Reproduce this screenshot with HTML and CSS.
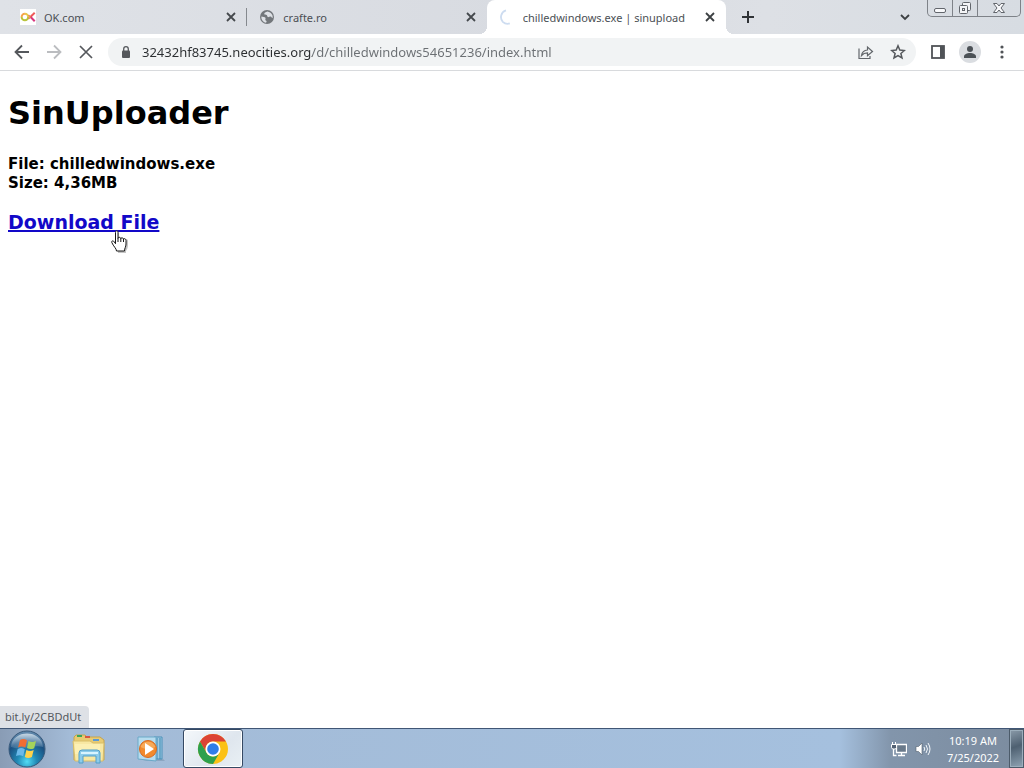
FILE: index.html
```html
<!DOCTYPE html>
<html lang="en">
<head>
<meta charset="utf-8">
<title>chilledwindows.exe | sinupload</title>
<link rel="stylesheet" href="styles.css">
</head>
<body>
<header class="tabstrip">
  <nav class="tabs" aria-label="Tabs">
    <div class="tab tab-first">
      <svg class="icon16" viewBox="0 0 16 16"><rect width="16" height="16" fill="#fff"/><g fill="none" stroke-width="2"><path d="M1.600 8a3.300 3.300 0 0 1 3.300-3.300" stroke="#f5a34a"/><path d="M1.600 8a3.300 3.300 0 0 0 6.600 0" stroke="#b9c43c"/><path d="M4.900 4.700A3.300 3.300 0 0 1 8.200 8" stroke="#e9c74a"/><path d="M14.700 3.700 10.400 8" stroke="#ef5a5a"/><path d="m10.400 7.800 4.300 4.500" stroke="#d8367e"/><path d="m8.500 6 2 2-2 2" stroke="#ea7a4d" stroke-width="1.200"/></g></svg>
      <span class="tab-title">OK.com</span>
      <button class="tab-close" aria-label="Close OK.com"><svg class="icon10" viewBox="0 0 10 10"><path d="m1 1 8 8M9 1 1 9" stroke="#45494d" stroke-width="1.800"/></svg></button>
    </div>
    <div class="tab">
      <svg class="icon16" viewBox="0 0 16 16"><circle cx="8" cy="8" r="7" fill="#73777b"/><path d="M8.500 2.400c-2 .7-3.200 1-3.200 2.400 0 1.300 1.600.8 2.400 1.300.8.600.2 1.500 1.200 2 1 .4 1.700-.8 2.700-.5 1 .3 1.100 1.600 2 1.400.6-2.600-1-5.800-5.100-6.600ZM2.400 7.500c1.600.4 3.500.5 4 1.300.5.800-.3 1.500 0 2.200.3.800 1.300.7 1.200 1.500-.1.600-.5.900-.6 1.200-3-.6-5-3.200-4.600-6.200Z" fill="#dee1e6"/></svg>
      <span class="tab-title">crafte.ro</span>
      <button class="tab-close" aria-label="Close crafte.ro"><svg class="icon10" viewBox="0 0 10 10"><path d="m1 1 8 8M9 1 1 9" stroke="#45494d" stroke-width="1.800"/></svg></button>
    </div>
    <div class="tab tab-active">
      <svg class="icon16" viewBox="0 0 16 16"><path d="M7 1.400a7 7 0 0 0-3.200 11.400 7 7 0 0 0 7 1.600" fill="none" stroke="#cddcf0" stroke-width="1.800"/></svg>
      <span class="tab-title">chilledwindows.exe | sinupload</span>
      <button class="tab-close" aria-label="Close chilledwindows.exe"><svg class="icon10" viewBox="0 0 10 10"><path d="m1 1 8 8M9 1 1 9" stroke="#3c4043" stroke-width="1.800"/></svg></button>
    </div>
  </nav>
  <button class="new-tab" aria-label="New tab"><svg class="icon12" viewBox="0 0 12 12"><path d="M6 0v12M0 6h12" stroke="#303336" stroke-width="2"/></svg></button>
  <button class="tab-search" aria-label="Search tabs"><svg class="icon10" viewBox="0 0 10 10"><path d="m1 3 4 4 4-4" fill="none" stroke="#3c4043" stroke-width="1.800"/></svg></button>
  <div class="window-controls">
    <button class="wc" aria-label="Minimize"><svg class="wc-icon" viewBox="0 0 14 14"><rect x="1.500" y="7.500" width="11" height="4" rx="1.500" fill="#f8f9fb" stroke="#62666c"/></svg></button>
    <button class="wc" aria-label="Restore"><svg class="wc-icon" viewBox="0 0 14 14"><g fill="#f4f5f7" stroke="#62666c"><rect x="4.500" y="1.500" width="8" height="8" rx="1"/><rect x="1.500" y="4.500" width="8" height="8" rx="1"/><rect x="4.500" y="7.500" width="2" height="2"/></g></svg></button>
    <button class="wc wc-close" aria-label="Close window"><svg class="wc-icon" viewBox="0 0 14 14"><path d="M1.500 2.500h3.500l2 2.500 2-2.500h3.500L9 7l3.500 4.500H9L7 9l-2 2.500H1.500L5 7Z" fill="#f8f9fb" stroke="#62666c"/></svg></button>
  </div>
</header>
<div class="toolbar">
  <button class="tool" aria-label="Back"><svg class="icon16" viewBox="0 0 16 16"><path d="M15 8H2M8 1.500 1.500 8 8 14.500" fill="none" stroke="#55585c" stroke-width="1.800"/></svg></button>
  <button class="tool" aria-label="Forward"><svg class="icon16" viewBox="0 0 16 16"><path d="M1 8h13M8 1.500 14.500 8 8 14.500" fill="none" stroke="#bbbdc0" stroke-width="1.800"/></svg></button>
  <button class="tool" aria-label="Stop"><svg class="icon16" viewBox="0 0 16 16"><path d="m2 2 12 12M14 2 2 14" stroke="#55585c" stroke-width="1.700"/></svg></button>
  <form class="omnibox">
    <svg class="icon12" viewBox="0 0 12 12"><rect x="2" y="4.500" width="8" height="7.500" rx="1" fill="#55585c"/><path d="M3.700 5V3a2.300 2.300 0 0 1 4.600 0v2" fill="none" stroke="#55585c" stroke-width="1.300"/></svg>
    <input class="url" type="text" aria-label="Address" value="32432hf83745.neocities.org/d/chilledwindows54651236/index.html">
    <button type="button" class="tool" aria-label="Share"><svg class="icon16" viewBox="0 0 16 16"><path d="M1 4.500v10h11V12M3.500 11.500C4 8 6 6.200 9.500 6V3l5 4.500-5 4.200V8.900c-2.500 0-4.500.8-6 2.600Z" fill="none" stroke="#62666a" stroke-width="1.200"/></svg></button>
    <button type="button" class="tool" aria-label="Bookmark"><svg class="icon16" viewBox="0 0 16 16"><path d="m8 1.800 1.800 4.300 4.600.4-3.500 3 1.100 4.500L8 11.600 4 14l1.100-4.500-3.500-3 4.600-.4Z" fill="none" stroke="#55585c" stroke-width="1.500"/></svg></button>
  </form>
  <button class="tool" aria-label="Side panel"><svg class="icon16" viewBox="0 0 16 16"><rect x="2" y="2" width="12" height="12" fill="none" stroke="#505357" stroke-width="1.800"/><path d="M10 2h4v12h-4Z" fill="#505357"/></svg></button>
  <button class="tool" aria-label="Profile"><svg class="icon22" viewBox="0 0 22 22"><circle cx="11" cy="11" r="11" fill="#dadde1"/><circle cx="11" cy="8" r="3" fill="#4c5257"/><path d="M5 17v-1.500c0-2 3-3.500 6-3.500s6 1.500 6 3.500V17Z" fill="#4c5257"/></svg></button>
  <button class="tool" aria-label="Menu"><svg class="icon16" viewBox="0 0 16 16"><g fill="#505357"><circle cx="8" cy="3" r="1.600"/><circle cx="8" cy="8" r="1.600"/><circle cx="8" cy="13" r="1.600"/></g></svg></button>
</div>
<main class="page">
  <h1 class="title">SinUploader</h1>
  <p class="details">File: chilledwindows.exe<br>Size: 4,36MB</p>
  <p class="download"><a class="download-link" href="#">Download File</a></p>
  <svg class="cursor" viewBox="0 0 20 24"><path d="M6 3.500C6 1 9 1 9 3.500V9c0-2 3-1.500 3 .3 0-1.600 3-1.200 3 .5 0-1.500 3-1 3 1V15c0 3-1 4.500-2 6v2H8v-2c-2-2-3.500-4.500-5.500-8-.8-1.700 1.500-2.600 2.500-.8l1 1.500Z" fill="#8a8a8a" opacity=".5"/><path d="M5.500 2.500C5.500.2 8 .2 8 2.500v5.800c0-1.500 2.800-1.300 2.800.4 0-1.300 2.700-1.100 2.700.6 0-1.200 2.500-.8 2.500 1.200V14c0 3-1.500 4-1.500 7h-8c0-2.500-3-4.500-4.700-8.500-.6-1.700 1.400-2.200 2.300-.8l1.400 2Z" fill="#fff" stroke="#171717"/><path d="M8 8v4m2.800-3.500V12m2.700-3v3" stroke="#171717"/></svg>
  <div class="status">bit.ly/2CBDdUt</div>
</main>
<footer class="taskbar">
  <button class="start" aria-label="Start"><svg class="icon38" viewBox="0 0 38 38"><defs><radialGradient id="orb" cx=".5" cy=".85" r=".9"><stop offset="0" stop-color="#52dcf4"/><stop offset=".3" stop-color="#2189b5"/><stop offset=".65" stop-color="#1b4f80"/><stop offset="1" stop-color="#7c9fbd"/></radialGradient><linearGradient id="gloss" x2="0" y2="1"><stop stop-color="#e4eef5" stop-opacity=".8"/><stop offset="1" stop-color="#a6c3d8" stop-opacity=".2"/></linearGradient></defs><circle cx="19" cy="19" r="18" fill="url(#orb)" stroke="#38597a"/><path d="M3 17C4-1 34-1 35 17c-9-3-21 4-32 0Z" fill="url(#gloss)"/><path d="M12 10c2.500-1.300 4.700-1.200 7 .3l-1.700 7.300c-2.500-1.400-4.800-1.500-7.200-.2Z" fill="#f16d32"/><path d="M20.500 11c2.400 1.300 4.700 1.300 7.500 0l-1.800 7.200c-2.600 1.200-4.800 1.200-7.200-.2Z" fill="#a5d35a"/><path d="M9.700 19c2.500-1.200 4.800-1.200 7.100.2l-1.600 7c-2.500-1.400-4.700-1.400-7.200-.1Z" fill="#6bb9ea"/><path d="M18.400 20c2.400 1.300 4.800 1.300 7.300.1l-1.800 6.900c-2.600 1.200-4.800 1.200-7.100-.1Z" fill="#ffd24b"/></svg></button>
  <button class="task" aria-label="Explorer"><svg class="icon34" viewBox="0 0 34 34"><path d="M2 5 4 3h9l2 2h13l4 3v20H2Z" fill="#e8cb72" stroke="#c5a44e"/><path d="M5 4h5" stroke="#3aa65a" stroke-width="2"/><path d="M13 5h5" stroke="#d75641" stroke-width="2"/><path d="M21 8h6" stroke="#5b9ad5" stroke-width="2"/><path d="M1 9h17l3 2h11l-1 18H3Z" fill="#f8e8a3" stroke="#d8bd68"/><path d="M3 12h25v10H3Z" fill="#fff5bf" opacity=".6"/><path d="M7 31V21q0-3 3-3h15q3 0 3 3v10h-4v-7H11v7Z" fill="#8dccea" stroke="#529fc9"/><path d="M9 21h17" stroke="#d8f4ff" stroke-width="2"/></svg></button>
  <button class="task" aria-label="Media Player"><svg class="icon28" viewBox="0 0 28 28"><path d="m6 25 20-1 2 2H10Z" fill="#7590aa" opacity=".5"/><path d="M17 2h8v22h-8Z" fill="#9fcae3" stroke="#4a91b9"/><path d="M20 3v21m3-21v21" stroke="#3c87b1"/><path d="M1 2h18v24L1 24Z" fill="#b6dcef" stroke="#6aa9c8"/><circle cx="11" cy="14" r="8.500" fill="#f28a2c" stroke="#d76a20"/><path d="M3.500 12a8 8 0 0 1 15 0q-8 4-15 0Z" fill="#fac078" opacity=".6"/><path d="m8 8 9 6-9 6Z" fill="#fff"/></svg></button>
  <button class="task task-active" aria-label="Chrome"><svg class="icon32" viewBox="0 0 32 32"><circle cx="16" cy="16" r="15" fill="#fbc116"/><path d="M3 8.500A15 15 0 0 1 29 8.500H16A7.500 7.500 0 0 0 9.500 19.800Z" fill="#dc4335"/><path d="M3 8.500 9.500 19.800A7.500 7.500 0 0 0 22.500 19.800L16 31A15 15 0 0 1 3 8.500Z" fill="#2da04d"/><circle cx="16" cy="16" r="7.500" fill="#fff"/><circle cx="16" cy="16" r="5.800" fill="#307de8"/></svg></button>
  <div class="tray">
    <svg class="icon16" viewBox="0 0 16 16"><path d="M5.500 3.500h10v8h-10Z" fill="#69798a" stroke="#fff" stroke-width="1.300"/><path d="M10.500 12v2M7 14.500h7M2.500 8v6.500h3" fill="none" stroke="#fff" stroke-width="1.300"/><path d="M.5 3.500h5v3l-1 1.500h-3l-1-1.500Z" fill="#536274" stroke="#fff"/><path d="M1.500 1v2m3-2v2" stroke="#fff"/></svg>
    <svg class="icon16" viewBox="0 0 16 16"><path d="M1 5.500h2.500L7 2v12l-3.500-3.500H1Z" fill="#fff" stroke="#53606d" stroke-width=".6"/><path d="M9 6q1.500 2 0 4m2-6q3 4 0 8m2-10q4 6 0 12" fill="none" stroke="#f2f6fa"/></svg>
    <div class="clock"><time>10:19 AM</time><time>7/25/2022</time></div>
  </div>
  <button class="show-desktop" aria-label="Show desktop"></button>
</footer>
</body>
</html>
```

FILE: styles.css
```css
* { box-sizing: border-box; }
body {
  margin: 0;
  min-height: 100vh;
  display: flex;
  flex-direction: column;
  background: #fff;
  color: #000;
  font-family: "Noto Sans", "Open Sans", sans-serif;
  font-size: 11px;
}
button {
  border: 0;
  padding: 0;
  background: none;
  display: flex;
  align-items: center;
  justify-content: center;
  flex: none;
}
svg { display: block; flex: none; }
.icon10 { width: 10px; height: 10px; }
.icon12 { width: 12px; height: 12px; }
.icon16 { width: 16px; height: 16px; }
.icon22 { width: 22px; height: 22px; }
.icon28 { width: 28px; height: 28px; }
.icon32 { width: 32px; height: 32px; }
.icon34 { width: 34px; height: 34px; }
.icon38 { width: 38px; height: 38px; }

.tabstrip {
  display: flex;
  height: 34px;
  padding: 0 3px 0 8px;
  background: linear-gradient(90deg, #dfe2e7, #d8dbe1 50%, #dde0e5 75%, #d7dce2);
}
.tabs { display: flex; flex: 0 1 718px; min-width: 0; }
.tab {
  flex: 1 1 0;
  min-width: 0;
  display: flex;
  align-items: center;
  gap: 8px;
  padding: 0 8px 0 12px;
  color: #4b4f54;
}
.tab-first {
  background: linear-gradient(#85898e, #85898e) right center / 1px 18px no-repeat;
}
.tab-active {
  position: relative;
  background: #fff;
  border-radius: 8px 8px 0 0;
}
.tab-active::before,
.tab-active::after {
  content: "";
  position: absolute;
  bottom: 0;
  width: 8px;
  height: 8px;
}
.tab-active::before {
  right: 100%;
  background: radial-gradient(circle at 0 0, transparent 8px, #fff 8px);
}
.tab-active::after {
  left: 100%;
  background: radial-gradient(circle at 100% 0, transparent 8px, #fff 8px);
}
.tab-title { flex: 1; overflow: hidden; white-space: nowrap; }
.tab-close { width: 16px; height: 16px; }
.new-tab { width: 28px; margin-left: 8px; }
.tab-search { width: 28px; margin-left: auto; }
.window-controls {
  display: flex;
  height: 17px;
  margin-left: 8px;
  border: 1px solid #7e8288;
  border-top: 0;
  border-radius: 0 0 5px 5px;
}
.wc { width: 25px; border-right: 1px solid #7e8288; }
.wc-close { width: 42px; border-right: 0; }
.wc-icon { width: 14px; height: 14px; }

.toolbar {
  display: flex;
  align-items: center;
  height: 37px;
  padding: 0 6px;
  border-bottom: 1px solid #d8dadd;
}
.tool { width: 32px; height: 28px; }
.omnibox {
  display: flex;
  align-items: center;
  flex: 1;
  min-width: 0;
  height: 28px;
  margin: 0 6px;
  padding: 0 2px 0 12px;
  border-radius: 14px;
  background: #f1f3f4;
}
.url {
  flex: 1;
  min-width: 0;
  margin-left: 10px;
  padding: 0;
  border: 0;
  outline: 0;
  font: 13px/20px "Noto Sans", "Open Sans", sans-serif;
  color: transparent;
  background: linear-gradient(90deg, #2b2e31 170px, #6b6f73 170px);
  background-clip: text;
}

.page {
  position: relative;
  flex: 1;
  padding: 21px 8px;
  font-family: Verdana, "DejaVu Sans", sans-serif;
  font-weight: bold;
}
.title { margin: 0; font-size: 32px; line-height: 42px; }
.details { margin: 21px 0 16px; font-size: 15px; line-height: 19px; }
.download { margin: 0; font-size: 19px; line-height: 26px; }
.download-link { color: #1208c8; text-decoration-thickness: 2px; }
.cursor {
  position: absolute;
  left: 110px;
  top: 159px;
  width: 20px;
  height: 24px;
}
.status {
  position: absolute;
  left: 0;
  bottom: 0;
  padding: 2px 8px 2px 5px;
  border-radius: 0 4px 0 0;
  background: #dee1e6;
  color: #55595e;
  font: 11px/18px "Noto Sans", "Open Sans", sans-serif;
}

.taskbar {
  display: flex;
  align-items: stretch;
  height: 40px;
  border-top: 1px solid #405675;
  background: linear-gradient(90deg, #899cb5, #a3bbd7 70px, #a5c0de 82%, #8295ab 87%, #7c8c9f);
}
.start { width: 54px; margin-right: 5px; }
.task { width: 60px; margin-right: 2px; }
.task-active {
  margin: 0;
  border: 1px solid #354963;
  border-radius: 3px;
  background: linear-gradient(135deg, #f4f8fb, #dfe6ee 60%, #e9f0f4);
  box-shadow: inset 0 0 0 1px #fff;
}
.tray { display: flex; align-items: center; gap: 8px; margin-left: auto; }
.clock {
  display: flex;
  flex-direction: column;
  align-items: center;
  width: 68px;
  padding-top: 1px;
  color: #fff;
  line-height: 17px;
}
.show-desktop {
  width: 15px;
  margin-left: 2px;
  border: 1px solid #4c5b6a;
  background: linear-gradient(160deg, #8b9baa, #4e6071 45%, #8fa3b3);
  box-shadow: inset 0 0 0 1px #9caebc;
}
```
